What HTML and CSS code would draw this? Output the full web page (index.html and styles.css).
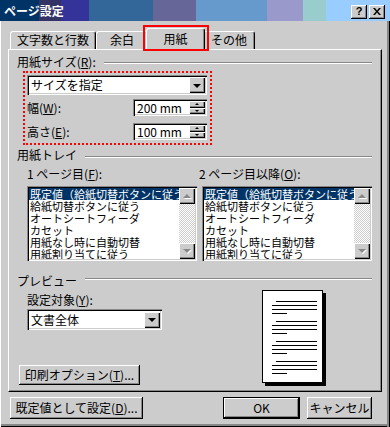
FILE: index.html
```html
<!DOCTYPE html>
<html lang="ja">
<head>
<meta charset="utf-8">
<title>ページ設定</title>
<link rel="stylesheet" href="styles.css">
</head>
<body>
<div class="window">
  <div class="titlebar">
    <span class="title">ページ設定</span>
    <div class="title-btns">
      <span class="tbtn help">?</span>
      <span class="tbtn close"><svg width="8" height="7" viewBox="0 0 8 7"><path d="M0 0h2l2 2.5L6 0h2L5 3.5 8 7H6L4 4.5 2 7H0l3-3.5z" fill="#000"/></svg></span>
    </div>
  </div>
  <div class="client">
    <div class="tabs">
      <div class="tab t1">文字数と行数</div>
      <div class="tab t2">余白</div>
      <div class="tab t3 active">用紙</div>
      <div class="tab t4">その他</div>
    </div>
    <div class="panel">
      <div class="group-head g1"><span>用紙サイズ(<u>R</u>):</span><span class="rule"></span></div>
      <div class="size-box">
        <div class="combo"><span class="combo-text">サイズを指定</span><span class="drop"><span class="tri-down"></span></span></div>
        <div class="field-row r1">
          <span class="lbl">幅(<u>W</u>):</span>
          <div class="spin"><span class="spin-text">200 mm</span><span class="spin-btns"><span class="sbtn"><span class="tri-up small"></span></span><span class="sbtn"><span class="tri-down small"></span></span></span></div>
        </div>
        <div class="field-row r2">
          <span class="lbl">高さ(<u>E</u>):</span>
          <div class="spin"><span class="spin-text">100 mm</span><span class="spin-btns"><span class="sbtn"><span class="tri-up small"></span></span><span class="sbtn"><span class="tri-down small"></span></span></span></div>
        </div>
      </div>

      <div class="group-head g2"><span>用紙トレイ</span><span class="rule"></span></div>
      <div class="trays">
        <div class="tray">
          <div class="sub-label">1 ページ目(<u>F</u>):</div>
          <div class="listbox">
            <ul class="items">
              <li class="sel">既定値（給紙切替ボタンに従う）</li>
              <li>給紙切替ボタンに従う</li>
              <li>オートシートフィーダ</li>
              <li>カセット</li>
              <li>用紙なし時に自動切替</li>
              <li>用紙割り当てに従う</li>
            </ul>
            <div class="vscroll"><span class="sb-btn"><span class="dis-up"></span></span><span class="sb-track"></span><span class="sb-btn"><span class="dis-down"></span></span></div>
          </div>
        </div>
        <div class="tray right">
          <div class="sub-label">2 ページ目以降(<u>O</u>):</div>
          <div class="listbox">
            <ul class="items">
              <li class="sel">既定値（給紙切替ボタンに従う）</li>
              <li>給紙切替ボタンに従う</li>
              <li>オートシートフィーダ</li>
              <li>カセット</li>
              <li>用紙なし時に自動切替</li>
              <li>用紙割り当てに従う</li>
            </ul>
            <div class="vscroll"><span class="sb-btn"><span class="dis-up"></span></span><span class="sb-track"></span><span class="sb-btn"><span class="dis-down"></span></span></div>
          </div>
        </div>
      </div>

      <div class="group-head g3"><span>プレビュー</span><span class="rule"></span></div>
      <div class="preview-row">
        <div class="preview-left">
          <div class="sub-label target">設定対象(<u>Y</u>):</div>
          <div class="combo small-combo"><span class="combo-text">文書全体</span><span class="drop"><span class="tri-down"></span></span></div>
          <button class="btn print-btn">印刷オプション(<u>T</u>)...</button>
        </div>
        <div class="page">
          <svg width="59" height="91" viewBox="0 0 59 91" shape-rendering="crispEdges">
            <g stroke="#000" stroke-width="1">
              <path d="M13 10.5H54M9 14.5H54M9 18.5H54M9 22.5H24"/>
              <path d="M13 30.5H54M9 34.5H54M9 38.5H54M9 42.5H24"/>
              <path d="M13 50.5H54M9 54.5H54M9 58.5H54M9 62.5H24"/>
              <path d="M13 70.5H54M9 74.5H54M9 78.5H54M9 82.5H24"/>
            </g>
          </svg>
        </div>
      </div>
    </div>
    <div class="footer">
      <button class="btn default-set">既定値として設定(<u>D</u>)...</button>
      <button class="btn ok">OK</button>
      <button class="btn cancel">キャンセル</button>
    </div>
  </div>
</div>
</body>
</html>
```
FILE: styles.css
```css
* { box-sizing: border-box; }
html, body { margin: 0; padding: 0; }
body {
  width: 390px;
  height: 427px;
  overflow: hidden;
  background: #cccccc;
  font-family: "Noto Sans CJK JP", "Liberation Sans", sans-serif;
  font-size: 12px;
  line-height: 14px;
  color: #000;
}
u { text-decoration: underline; text-underline-offset: 1px; }

.window {
  width: 390px;
  height: 427px;
  display: flex;
  flex-direction: column;
}

/* title bar */
.titlebar {
  height: 21px;
  flex: none;
  display: flex;
  align-items: center;
  padding: 0 5px 0 4px;
  background: linear-gradient(to right,
    #003366 0 39px, #333366 39px 61px, #333399 61px 89px,
    #336699 89px 153px, #666699 153px 196px, #6699cc 196px 267px,
    #9999cc 267px 303px, #99cccc 303px 326px, #99ccff 326px 390px);
}
.title { color: #fff; font-weight: bold; font-size: 12px; line-height: 14px; }
.title-btns { margin-left: auto; display: flex; gap: 2px; align-self: flex-start; margin-top: 5px; }
.tbtn {
  width: 16px;
  height: 14px;
  background: #cccccc;
  box-shadow: inset -1px -1px #000, inset 1px 1px #fff, inset -2px -2px #888;
  display: flex;
  align-items: center;
  justify-content: center;
}
.help { font-family: "Liberation Sans", sans-serif; font-weight: bold; font-size: 11px; line-height: 11px; padding-bottom: 1px; }
.close svg { display: block; margin-bottom: 1px; }

/* client area */
.client {
  flex: 1;
  display: flex;
  flex-direction: column;
  padding: 7px 0 0 8px;
  box-shadow: inset 1px 0 #fff, inset -1px 0 #000, inset -3px 0 #888, inset 0 -1px #000, inset 0 -3px #888;
}

/* tabs */
.tabs {
  display: flex;
  align-items: flex-end;
  height: 21px;
  padding-left: 2px;
  position: relative;
  z-index: 1;
}
.tab {
  height: 18px;
  padding-top: 1px;
  text-align: center;
  background: #cccccc;
  border-top: 1px solid #fff;
  border-left: 1px solid #fff;
  border-right: 1px solid #000;
  box-shadow: inset -1px 0 #888;
  border-radius: 3px 3px 0 0;
  white-space: nowrap;
}
.t1 { width: 86px; }
.t2 { width: 52px; }
.t4 { width: 52px; }
.tab.active {
  width: 59px;
  height: 22px;
  margin: 0 -2px -1px;
  padding-top: 3px;
  position: relative;
  z-index: 2;
}
.tab.active::after {
  content: "";
  position: absolute;
  left: -4px;
  top: -4px;
  right: -5px;
  bottom: -1px;
  border: 2px solid #ff0000;
}

/* panel */
.panel {
  width: 374px;
  height: 343px;
  flex: none;
  border: 1px solid;
  border-color: #fff #000 #000 #fff;
  box-shadow: inset -1px -1px #888;
  padding: 5px 9px 0 8px;
  display: flex;
  flex-direction: column;
}

.group-head {
  display: flex;
  height: 14px;
  white-space: nowrap;
}
.group-head .rule {
  flex: 1;
  margin-left: 8px;
  height: 2px;
  border-top: 1px solid #888;
  border-bottom: 1px solid #fff;
}
.g1 .rule { margin-top: 7px; }
.g2 { margin-top: 3px; }
.g2 .rule { margin-top: 8px; }
.g3 { margin-top: 13px; }
.g3 .rule { margin-top: 4px; }

/* size box */
.size-box {
  width: 189px;
  margin: 2px 0 0 6px;
  border: 2px dotted #ff0000;
  padding: 2px 3px 3px 2px;
}
.combo {
  height: 20px;
  background: #fff;
  box-shadow: inset 1px 1px #888, inset 2px 2px #000, inset -1px -1px #fff, inset -2px -2px #ccc;
  display: flex;
  align-items: center;
  padding: 2px;
}
.combo-text { flex: 1; padding-left: 2px; white-space: nowrap; }
.drop {
  width: 16px;
  height: 16px;
  background: #cccccc;
  box-shadow: inset 1px 1px #fff, inset -1px -1px #000, inset -2px -2px #888;
  display: flex;
  align-items: center;
  justify-content: center;
}
.tri-down {
  width: 0; height: 0;
  border-left: 4px solid transparent;
  border-right: 4px solid transparent;
  border-top: 4px solid #000;
  margin-top: 1px;
}
.tri-up {
  width: 0; height: 0;
  border-left: 4px solid transparent;
  border-right: 4px solid transparent;
  border-bottom: 4px solid #000;
}
.tri-down.small { border-left-width: 2px; border-right-width: 2px; border-top-width: 2px; margin-top: 0; }
.tri-up.small { border-left-width: 2px; border-right-width: 2px; border-bottom-width: 2px; }

.field-row { display: flex; align-items: center; height: 17px; }
.r1 { margin-top: 4px; }
.r2 { margin-top: 7px; }
.lbl { white-space: nowrap; }
.spin {
  margin-left: auto;
  width: 74px;
  height: 17px;
  background: #fff;
  box-shadow: inset 1px 1px #888, inset 2px 2px #000, inset -1px -1px #fff, inset -2px -2px #ccc;
  display: flex;
  padding: 2px;
}
.spin-text { flex: 1; padding-left: 2px; line-height: 13px; white-space: nowrap; }
.spin-btns { width: 16px; display: flex; flex-direction: column; }
.sbtn {
  flex: 1;
  background: #cccccc;
  box-shadow: inset 1px 1px #fff, inset -1px -1px #000, inset -2px -2px #888;
  display: flex;
  align-items: center;
  justify-content: center;
}

/* trays */
.trays { display: flex; padding-left: 10px; gap: 5px; margin-top: 5px; }
.tray { width: 170px; }
.tray.right .sub-label { margin-left: -3px; }
.sub-label { height: 14px; white-space: nowrap; }
.listbox {
  margin-top: 5px;
  height: 75px;
  background: #fff;
  box-shadow: inset 1px 1px #888, inset 2px 2px #000, inset -1px -1px #fff, inset -2px -2px #ccc;
  padding: 2px;
  display: flex;
}
.items {
  flex: 1;
  min-width: 0;
  overflow: hidden;
  list-style: none;
  margin: 0;
  padding: 0;
}
.items li { height: 12px; font-size: 11px; line-height: 12px; white-space: nowrap; padding-left: 1px; }
.items li.sel { background: #003366; color: #fff; }
.vscroll { width: 16px; display: flex; flex-direction: column; }
.sb-btn {
  height: 16px;
  flex: none;
  background: #cccccc;
  box-shadow: inset 1px 1px #fff, inset -1px -1px #000, inset -2px -2px #888;
  display: flex;
  align-items: center;
  justify-content: center;
}
.sb-track {
  flex: 1;
  background-image: conic-gradient(#fff 25%, #ccc 0 50%, #fff 0 75%, #ccc 0);
  background-size: 2px 2px;
}
.dis-up, .dis-down {
  width: 0; height: 0;
  border-left: 4px solid transparent;
  border-right: 4px solid transparent;
  filter: drop-shadow(1px 1px 0 #fff);
}
.dis-up { border-bottom: 4px solid #888; }
.dis-down { border-top: 4px solid #888; }

/* preview */
.preview-row { display: flex; align-items: flex-start; }
.preview-left { display: flex; flex-direction: column; align-items: flex-start; }
.target { margin: 5px 0 0 10px; }
.small-combo { width: 135px; height: 21px; margin: 2px 0 0 10px; }
.btn {
  font: inherit;
  color: #000;
  background: #cccccc;
  border: none;
  padding: 0;
  box-shadow: inset -1px -1px #000, inset 1px 1px #fff, inset -2px -2px #888;
  white-space: nowrap;
}
.print-btn { width: 121px; height: 20px; margin: 35px 0 0 2px; }
.page {
  width: 61px;
  height: 93px;
  margin: 2px 49px 0 auto;
  background: #fff;
  border: 1px solid #000;
  box-shadow: 3px 3px 0 #000;
}
.page svg { display: block; }

/* footer */
.footer { display: flex; margin-top: 5px; padding-left: 2px; height: 22px; }
.default-set { width: 133px; height: 22px; }
.ok {
  width: 77px;
  height: 22px;
  margin-left: 80px;
  border: 1px solid #000;
  box-shadow: inset -1px -1px #000, inset 1px 1px #fff, inset -2px -2px #888;
}
.cancel { width: 65px; height: 22px; margin-left: 7px; }
```
